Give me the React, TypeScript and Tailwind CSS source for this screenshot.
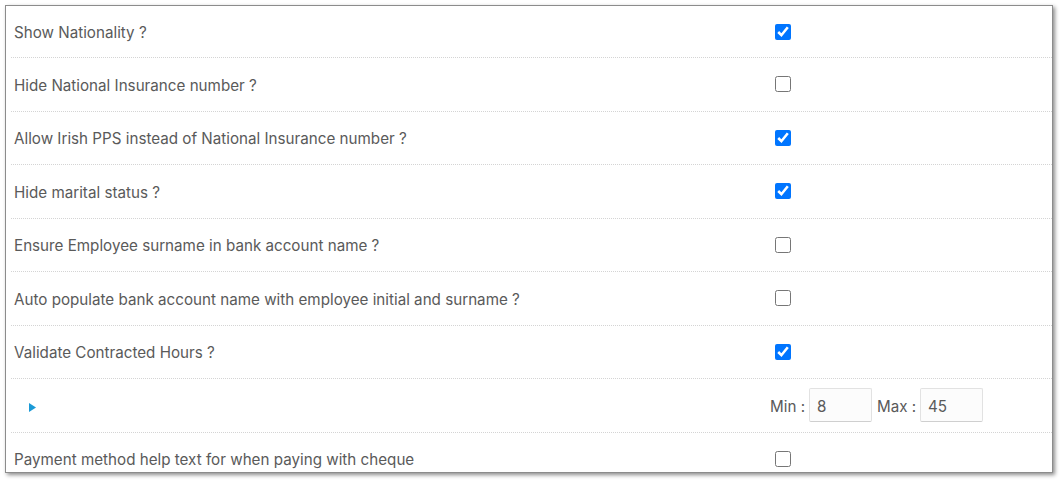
import React from "react";

type Row = { label: string; checked: boolean };

const rows: Row[] = [
  { label: "Hide National Insurance number ?", checked: false },
  { label: "Allow Irish PPS instead of National Insurance number ?", checked: true },
  { label: "Hide marital status ?", checked: true },
  { label: "Ensure Employee surname in bank account name ?", checked: false },
  { label: "Auto populate bank account name with employee initial and surname ?", checked: false },
  { label: "Validate Contracted Hours ?", checked: true },
];

function Check({ checked }: { checked: boolean }) {
  return (
    <input
      type="checkbox"
      defaultChecked={checked}
      className="ml-[5px] m-0 h-4 w-4 accent-[#0075ff]"
    />
  );
}

function LineRow({ label, checked, first }: Row & { first?: boolean }) {
  return (
    <div
      className={`flex items-center border-b border-dotted border-[#d4d4d4] ${first ? "h-[52px]" : "h-[53.5px]"}`}
    >
      <div className="w-[759px] pl-[3px] pt-[4px]">{label}</div>
      <Check checked={checked} />
    </div>
  );
}

export default function App() {
  return (
    <div className="h-[483px] w-[1062px] bg-white pl-[5px] pt-[5px]" style={{ fontFamily: "Inter, 'Noto Sans', sans-serif" }}>
      <div className="h-[468px] w-[1048px] overflow-hidden border border-[#8c8c8c] bg-white text-[15.2px] text-[#5a5a5a] shadow-[2px_2px_4px_rgba(0,0,0,0.45)]">
        <div className="ml-[5px]">
          <LineRow label="Show Nationality ?" checked={true} first />
          {rows.map((r) => (
            <LineRow key={r.label} {...r} />
          ))}
          <div className="flex h-[53.5px] items-center border-b border-dotted border-[#d4d4d4]">
            <div className="w-[759px] shrink-0 pl-[18px] pt-[4px]">
              <svg width="8" height="9" viewBox="0 0 8 9" className="block">
                <path d="M0 0 L7 4.5 L0 9 Z" fill="#1b9ad6" />
              </svg>
            </div>
            <div className="flex shrink-0 items-center whitespace-nowrap">
              <span className="w-[39px] shrink-0 pt-[4px]">Min :</span>
              <input
                readOnly
                value="8"
                className="h-[34px] w-[63px] shrink-0 rounded-[2px] border border-[#e2e2e2] border-b-[#cfcfcf] bg-[#fcfcfc] pl-[7px] pt-[2px] text-[15.2px] text-[#5a5a5a] outline-none"
              />
              <span className="ml-[5px] w-[43px] shrink-0 pt-[4px]">Max :</span>
              <input
                readOnly
                value="45"
                className="h-[34px] w-[63px] shrink-0 rounded-[2px] border border-[#e2e2e2] border-b-[#cfcfcf] bg-[#fcfcfc] pl-[7px] pt-[2px] text-[15.2px] text-[#5a5a5a] outline-none"
              />
            </div>
          </div>
          <LineRow label="Payment method help text for when paying with cheque" checked={false} />
        </div>
      </div>
    </div>
  );
}
